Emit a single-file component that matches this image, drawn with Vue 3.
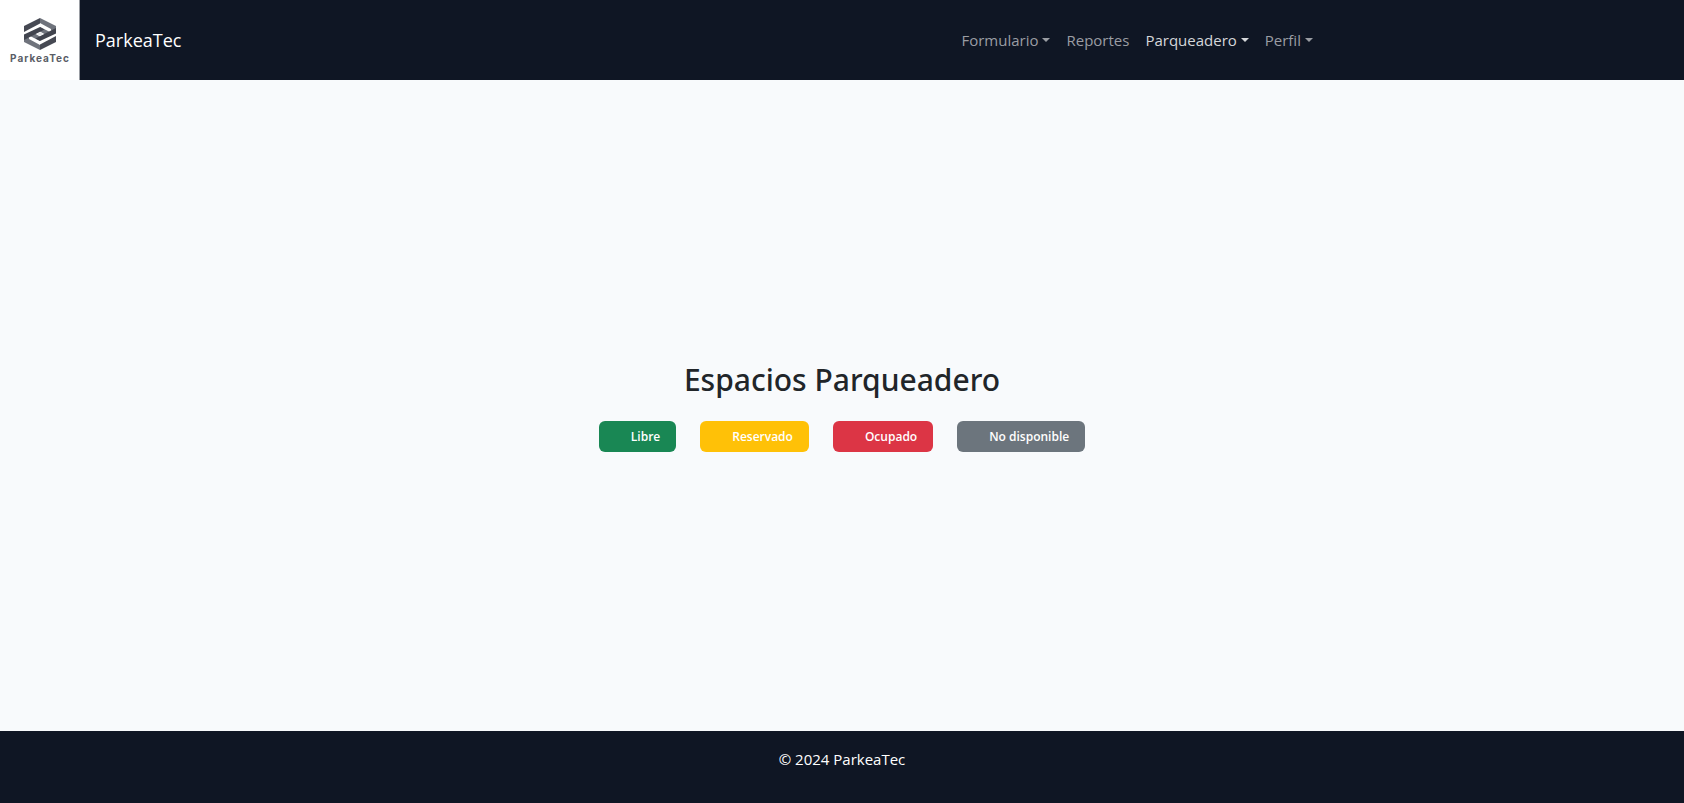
<script setup>
const links = [
  { label: 'Formulario', menu: true },
  { label: 'Reportes' },
  { label: 'Parqueadero', menu: true, active: true },
  { label: 'Perfil', menu: true },
]
const states = [
  { label: 'Libre', tone: 'free' },
  { label: 'Reservado', tone: 'reserved' },
  { label: 'Ocupado', tone: 'busy' },
  { label: 'No disponible', tone: 'off' },
]
</script>

<template>
  <div class="page">
    <header class="navbar">
      <a class="brand" href="#">
        <svg class="logo" viewBox="0 0 80 80" role="img" aria-label="ParkeaTec logo">
          <rect width="80" height="80" fill="#9a9da3" />
          <rect width="79" height="80" fill="#fff" />
          <path d="M40 18 56 26V33L51 30.500V29L40 23Z" fill="#6f737c" />
          <path d="M40 50 24 42V35L29 37.500V39L40 45Z" fill="#6f737c" />
          <path d="M40 18 24 26V32L40 23.500Z" fill="#464953" />
          <path d="M40 50 56 42V36L40 44.500Z" fill="#464953" />
          <path d="M40 27 52 33 47 35.500 40 31.500Z" fill="#6f737c" />
          <path d="M40 41 28 35 33 32.500 40 36.500Z" fill="#6f737c" />
          <path d="M24 34.500 40 27 44.500 29.500 24 40Z" fill="#41444e" />
          <path d="M56 33.500 40 41 35.500 38.500 56 28Z" fill="#41444e" />
          <path d="M37 34 40 32.300 43 34 40 35.700Z" fill="#e4e5e7" />
          <text x="40" y="62" text-anchor="middle">ParkeaTec</text>
        </svg>
        <span class="name">ParkeaTec</span>
      </a>
      <nav class="links">
        <a
          v-for="link in links"
          :key="link.label"
          href="#"
          class="link"
          :class="{ menu: link.menu, active: link.active }"
        >{{ link.label }}</a>
      </nav>
    </header>

    <main class="content">
      <h1>Espacios Parqueadero</h1>
      <div class="legend">
        <span v-for="s in states" :key="s.label" class="badge" :class="s.tone">{{ s.label }}</span>
      </div>
    </main>

    <footer class="footer">© 2024 ParkeaTec</footer>
  </div>
</template>

<style>
body {
  margin: 0;
}
</style>

<style scoped>
.page {
  min-height: 100vh;
  display: flex;
  flex-direction: column;
  background: #f8fafc;
  color: #212529;
  font-family: "Segoe UI", "Open Sans", "Noto Sans", sans-serif;
  font-size: 15px;
  line-height: 24px;
}
.navbar {
  display: flex;
  align-items: center;
  justify-content: space-between;
  padding-right: 363px;
  background: #0f1624;
}
.brand {
  display: flex;
  align-items: center;
  gap: 15px;
  color: #fff;
  text-decoration: none;
}
.logo {
  display: block;
  width: 80px;
  height: 80px;
}
.logo text {
  font-family: Inter, sans-serif;
  font-size: 10px;
  font-weight: 700;
  letter-spacing: 1px;
  fill: #5a5d66;
}
.name {
  font-size: 18px;
}
.links {
  display: flex;
}
.link {
  padding: 8px;
  color: #9a9da3;
  text-decoration: none;
}
.link.active {
  color: #d5d7da;
}
.menu::after {
  content: "";
  display: inline-block;
  margin-left: 4px;
  vertical-align: 4px;
  border-top: 4px solid;
  border-right: 4px solid transparent;
  border-left: 4px solid transparent;
}
.content {
  flex: 1;
  display: flex;
  flex-direction: column;
  align-items: center;
  justify-content: center;
}
h1 {
  margin: 0 0 20px;
  font-family: "Segoe UI", "Noto Sans", "Open Sans", sans-serif;
  font-size: 30px;
  font-weight: 500;
  line-height: 42px;
}
.legend {
  display: flex;
  gap: 24px;
}
.badge {
  padding: 8px 16px 8px 32px;
  border-radius: 6px;
  color: #fff;
  font-size: 12px;
  font-weight: 600;
  line-height: 15px;
}
.free {
  background: #198754;
}
.reserved {
  background: #ffc107;
}
.busy {
  background: #dc3545;
}
.off {
  background: #6c757d;
}
.footer {
  padding: 16px 16px 32px;
  background: #0f1624;
  color: #fff;
  text-align: center;
}
</style>
